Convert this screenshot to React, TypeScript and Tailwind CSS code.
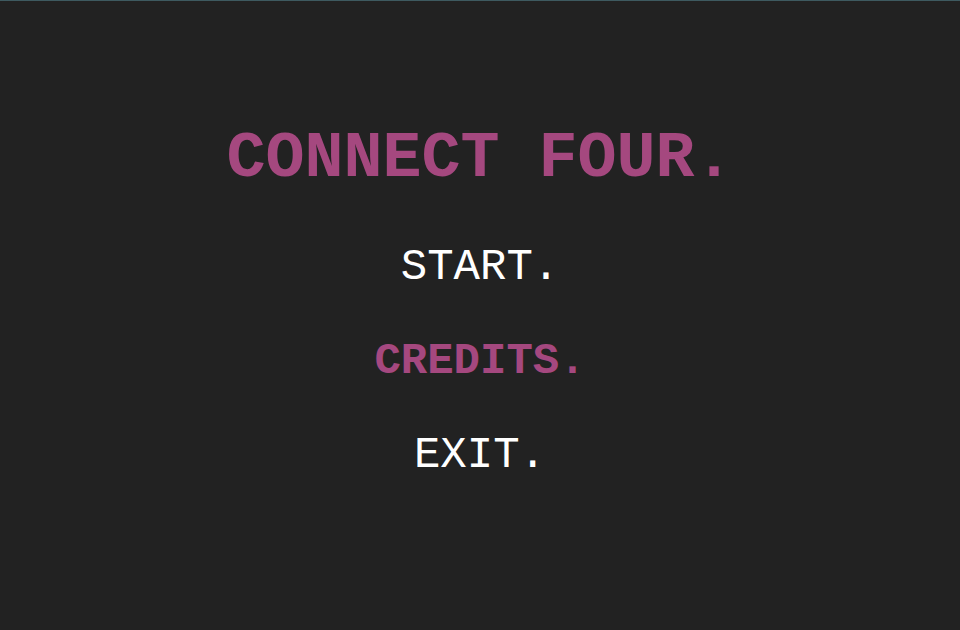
export default function App() {
  const mono = { fontFamily: '"Courier New", "Liberation Mono", monospace' };
  return (
    <div className="w-[960px] h-[630px] bg-[#222222] border-t border-[#3e5a60] overflow-hidden" style={mono}>
      <div className="flex flex-col items-center pt-[126px]">
        <h1 className="text-[65px] leading-[65px] font-bold text-[#a5487f]">CONNECT FOUR.</h1>
        <div className="mt-[53px] flex flex-col items-center gap-[50px]">
          <div className="text-[44px] leading-[44px] text-white">START.</div>
          <div className="text-[44px] leading-[44px] font-bold text-[#a5487f]">CREDITS.</div>
          <div className="text-[44px] leading-[44px] text-white">EXIT.</div>
        </div>
      </div>
    </div>
  );
}
